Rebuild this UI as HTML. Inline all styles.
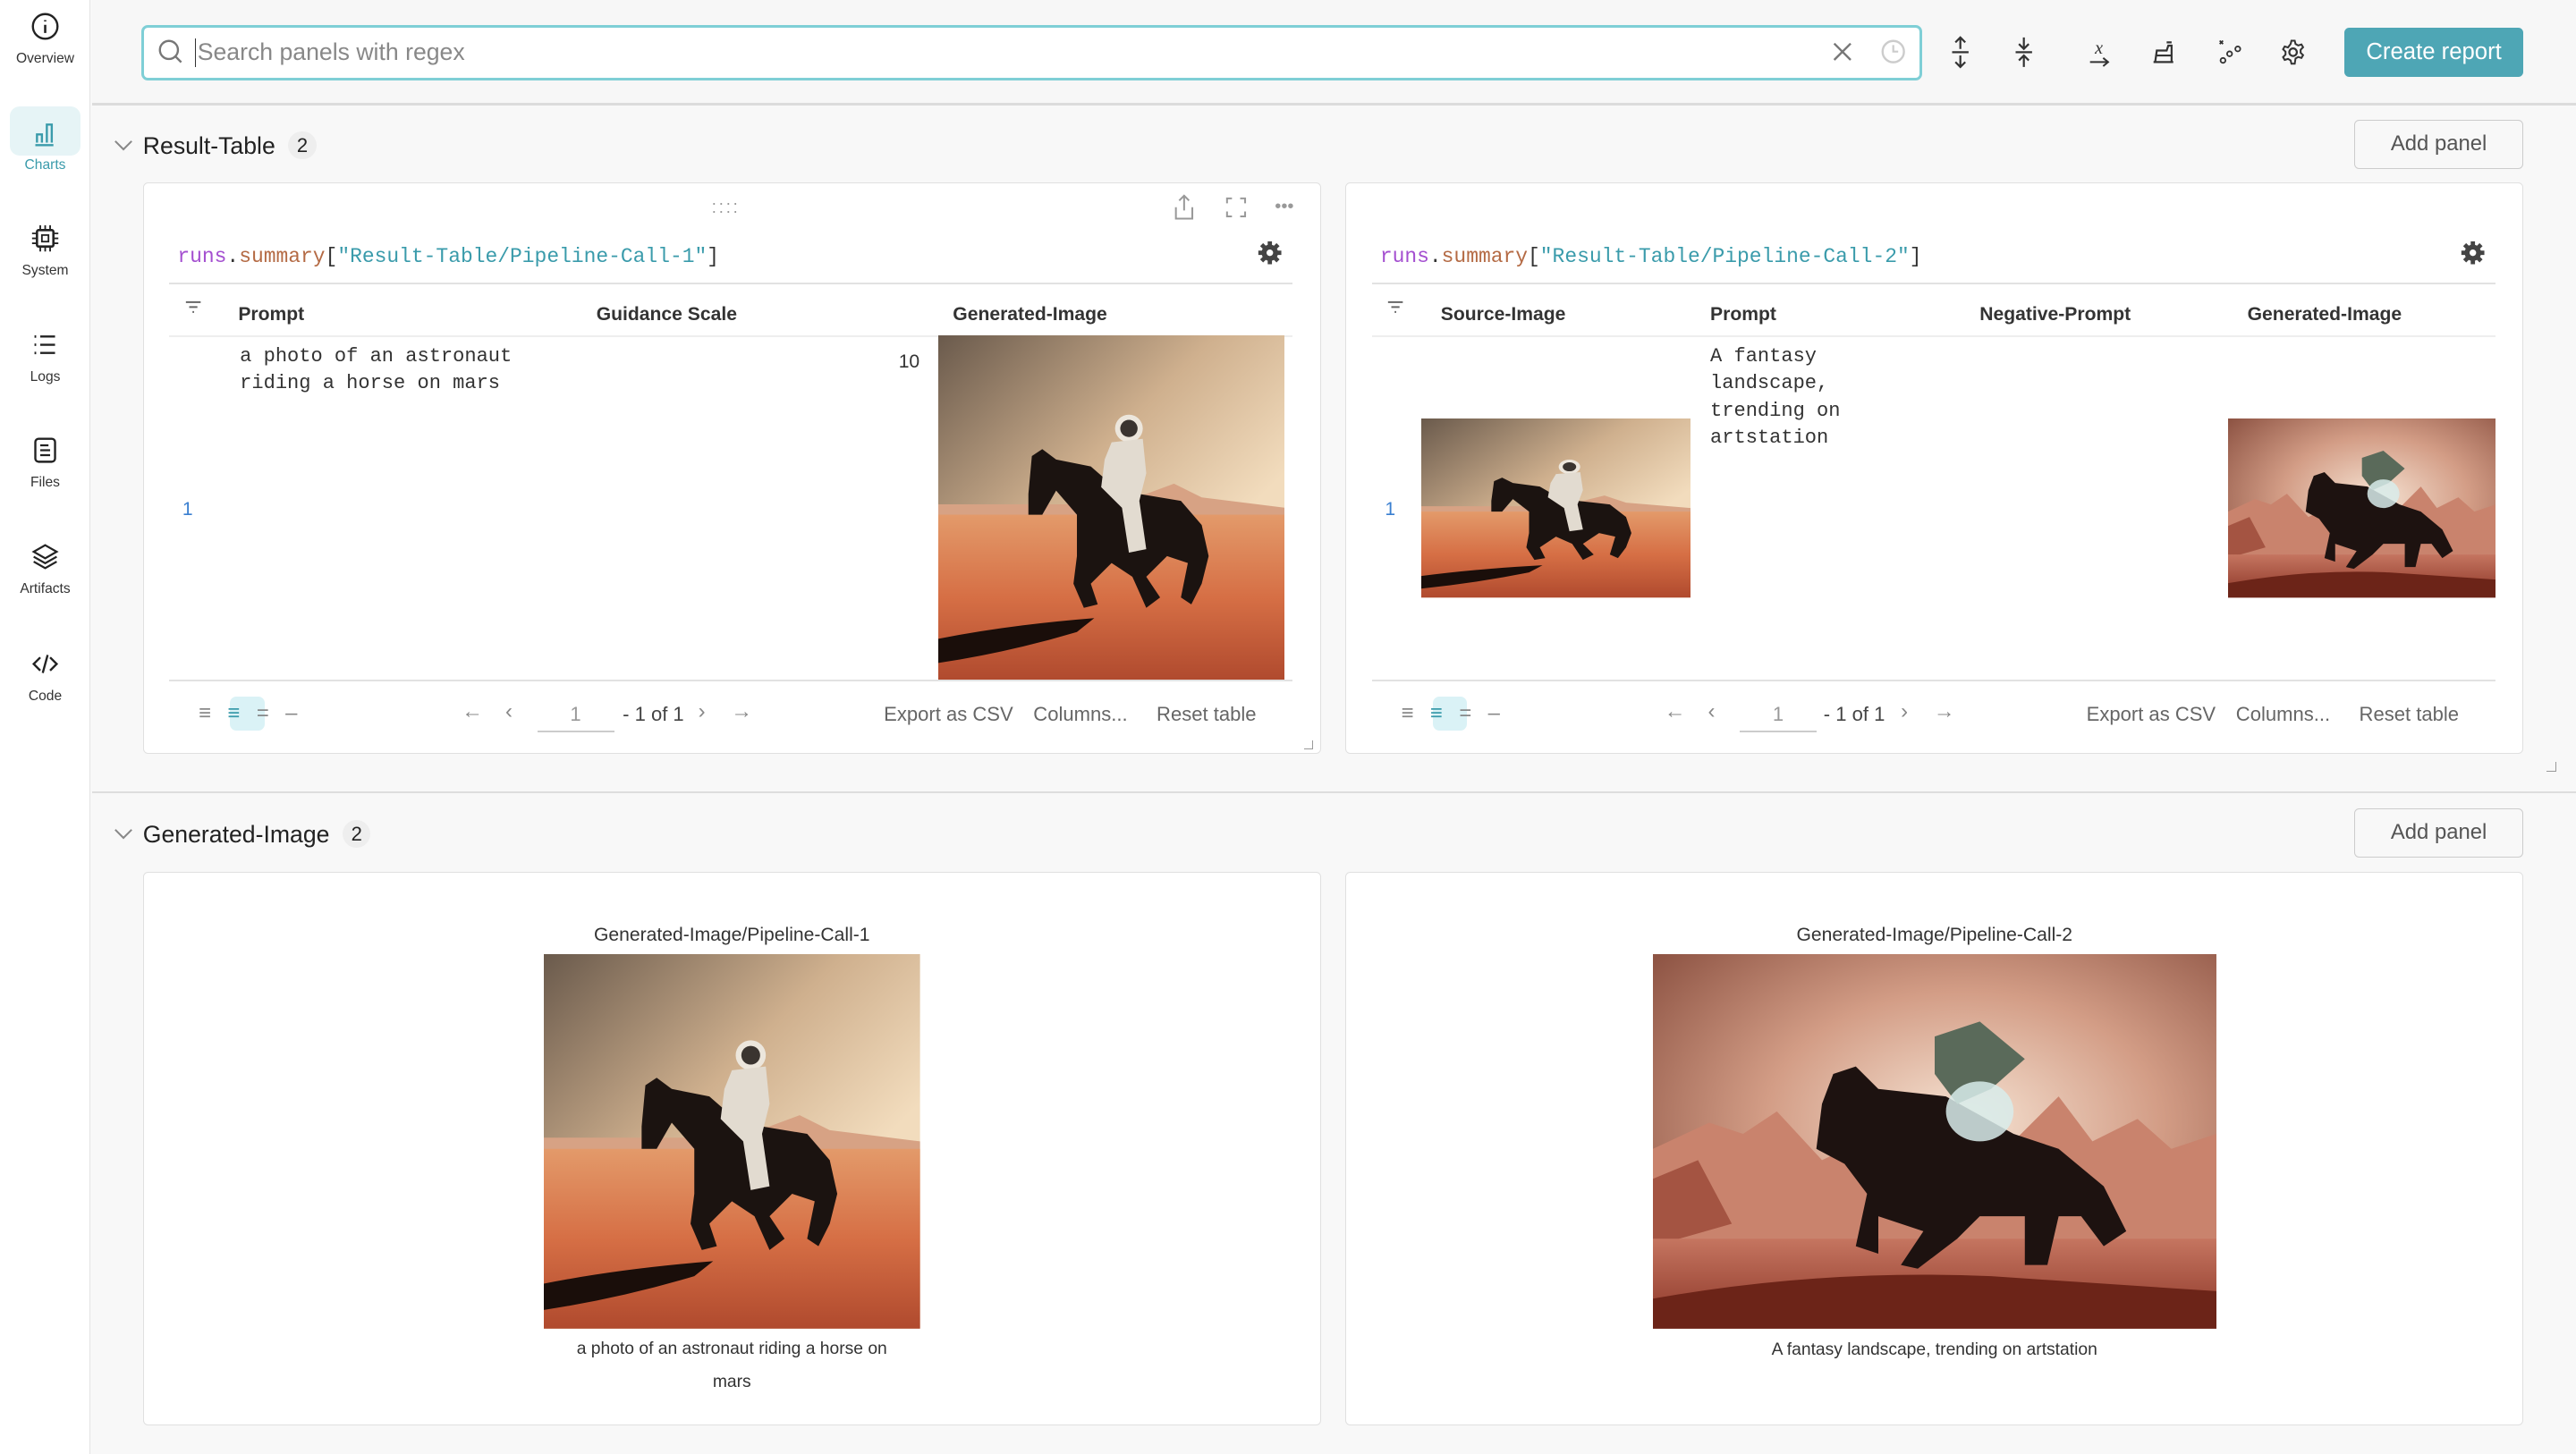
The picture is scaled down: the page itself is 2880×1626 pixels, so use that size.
<!DOCTYPE html>
<html><head><meta charset="utf-8"><style>
*{box-sizing:border-box;margin:0;padding:0}
html,body{width:2880px;height:1626px;overflow:hidden;background:#f8f8f8}
#r{position:absolute;left:0;top:0;width:1568px;height:885.3px;zoom:1.83673;font-family:"Liberation Sans",sans-serif;color:#333;background:#f8f8f8}
.a{position:absolute}
.side{left:0;top:0;width:55px;height:885.3px;background:#fff;border-right:1px solid #e4e4e4}
.si{position:absolute;left:0;width:55px;text-align:center;font-size:8.5px;color:#333}
.si svg{display:block;margin:0 auto 6px}
.top{left:56px;top:0;width:1512px;height:64px;background:#f7f7f7;border-bottom:2px solid #dcdcdc}
.search{left:86px;top:15px;width:1084px;height:34px;border:2px solid #7fcfd6;border-radius:4px;background:#fff}
.ic{position:absolute;top:22px}
.btn{left:1427px;top:17px;width:109px;height:30px;background:#4ea6b5;border-radius:3px;color:#fff;font-size:14px;text-align:center;line-height:30px}
.sec{font-size:14.5px;color:#222}
.badge{display:inline-block;width:17px;height:17px;border-radius:9px;background:#eee;font-size:12px;text-align:center;line-height:17px;margin-left:8px;vertical-align:1px}
.add{width:103px;height:30px;border:1px solid #ccc;border-radius:3px;background:#f8f8f8;font-size:13px;color:#555;text-align:center;line-height:28px}
.panel{background:#fff;border:1px solid #e0e0e0;border-radius:3px}
.mono{font-family:"Liberation Mono",monospace}
.code{font-size:12.5px;color:#333}
.hr{position:absolute;height:1px;background:#e2e2e2}
.th{position:absolute;font-size:11.5px;font-weight:bold;color:#333;top:185px}
.cell{position:absolute;font-family:"Liberation Mono",monospace;font-size:12px;line-height:16.5px;color:#333}
.foot{position:absolute;font-size:12px;color:#666}
.cap{position:absolute;font-size:10.5px;color:#333;text-align:center}
svg.img{position:absolute;display:block}
</style></head><body><div id="r">

<svg width="0" height="0" style="position:absolute"><defs>
<linearGradient id="sky1" x1="0" y1="0" x2="1" y2="1"><stop offset="0" stop-color="#6a5a4c"/><stop offset=".4" stop-color="#cfb08e"/><stop offset=".7" stop-color="#f2dcbd"/></linearGradient>
<linearGradient id="gr1" x1="0" y1="0" x2="0" y2="1"><stop offset="0" stop-color="#e39a6a"/><stop offset=".5" stop-color="#d66f45"/><stop offset="1" stop-color="#b04a2e"/></linearGradient>
<radialGradient id="sky2" cx=".55" cy=".45" r=".7"><stop offset="0" stop-color="#f6e3d3"/><stop offset=".5" stop-color="#d39d86"/><stop offset="1" stop-color="#8e5444"/></radialGradient>
<linearGradient id="gr2" x1="0" y1="0" x2="0" y2="1"><stop offset="0" stop-color="#c57560"/><stop offset="1" stop-color="#8a3426"/></linearGradient>
<g id="astro">
<rect width="100" height="100" fill="url(#sky1)"/>
<path d="M0 49 L40 49 L60 46 L68 43 L76 47 L100 50 L100 100 L0 100Z" fill="#d7a284"/>
<rect y="52" width="100" height="48" fill="url(#gr1)"/>
<path d="M0 88 Q20 84 45 82 L40 86 Q20 92 0 95Z" fill="#1a0e0a"/>
<path d="M27 35 L30 33 L34 36 L44 38 L52 45 L70 48 L76 55 L78 64 L76 72 L73 78 L70 76 L72 66 L66 64 L60 70 L64 76 L60 79 L56 70 L50 66 L44 72 L46 78 L42 79 L39 72 L40 64 L40 52 L34 45 L30 52 L26 52 L26 46Z" fill="#1b1310"/>
<circle cx="55" cy="27" r="4" fill="#ece6dc"/><circle cx="55" cy="27" r="2.5" fill="#3a3430"/>
<path d="M50 31 L59 30 L60 40 L58 48 L60 62 L55 63 L53 50 L47 44 L48 36Z" fill="#e2dbd0"/>
</g>
<g id="fant">
<rect width="100" height="100" fill="url(#sky2)"/>
<path d="M0 52 L10 45 L16 48 L22 42 L30 55 L40 48 L60 56 L72 38 L78 50 L86 44 L92 52 L100 48 L100 80 L0 80Z" fill="#c9836d"/>
<path d="M0 60 L8 55 L14 72 L0 78Z" fill="#a45442"/>
<rect y="76" width="100" height="24" fill="url(#gr2)"/>
<path d="M0 92 Q30 84 60 86 L100 90 L100 100 L0 100Z" fill="#6c2418"/>
<path d="M32 32 L36 30 L40 36 L52 38 L64 48 L72 52 L80 62 L84 74 L80 78 L76 70 L72 70 L70 83 L66 83 L66 70 L58 70 L54 76 L47 84 L44 83 L48 74 L40 70 L40 80 L36 78 L38 64 L34 56 L29 52 L30 40Z" fill="#1d1210"/>
<path d="M50 22 L58 18 L66 28 L60 36 L54 40 L50 32Z" fill="#5a6a5a"/>
<ellipse cx="58" cy="42" rx="6" ry="8" fill="#d8eceb" opacity=".85"/>
</g>
</defs></svg>

<!-- sidebar -->
<div class="a side">
 <div class="si" style="top:7px"><svg width="18" height="18" viewBox="0 0 18 18"><circle cx="9" cy="9" r="7.5" fill="none" stroke="#222" stroke-width="1.3"/><path d="M9 8v5M9 5.2v.8" stroke="#222" stroke-width="1.4"/></svg>Overview</div>
 <div class="a" style="left:6px;top:65px;width:43px;height:30px;background:#e6f4f6;border-radius:6px"></div>
 <div class="si" style="top:72px;color:#3a9bab"><svg width="18" height="18" viewBox="0 0 18 18"><path d="M4 15V10h3v5M10 15V4h3v11M3 16.5h11" fill="none" stroke="#3a9bab" stroke-width="1.3"/></svg>Charts</div>
 <div class="si" style="top:136px"><svg width="18" height="18" viewBox="0 0 18 18"><rect x="4" y="4" width="10" height="10" rx="1" fill="none" stroke="#222" stroke-width="1.4"/><rect x="7" y="7" width="4" height="4" fill="none" stroke="#222"/><path d="M6 1v3M9 1v3M12 1v3M6 14v3M9 14v3M12 14v3M1 6h3M1 9h3M1 12h3M14 6h3M14 9h3M14 12h3" stroke="#222"/></svg>System</div>
 <div class="si" style="top:201px"><svg width="18" height="18" viewBox="0 0 18 18"><path d="M6 4h9M6 9h9M6 14h9" stroke="#222" stroke-width="1.3"/><path d="M2.5 4h1M2.5 9h1M2.5 14h1" stroke="#222" stroke-width="1.5"/></svg>Logs</div>
 <div class="si" style="top:265px"><svg width="18" height="18" viewBox="0 0 18 18"><rect x="3" y="2" width="12" height="14" rx="2" fill="none" stroke="#222" stroke-width="1.3"/><path d="M6 6h5M6 9h6M6 12h6" stroke="#222" stroke-width="1.2"/></svg>Files</div>
 <div class="si" style="top:330px"><svg width="18" height="18" viewBox="0 0 18 18"><path d="M9 2l7 4-7 4-7-4z M2 9l7 4 7-4 M2 12l7 4 7-4" fill="none" stroke="#222" stroke-width="1.2"/></svg>Artifacts</div>
 <div class="si" style="top:395px"><svg width="18" height="18" viewBox="0 0 18 18"><path d="M6 5L2 9l4 4M12 5l4 4-4 4M10.5 3.5l-3 11" fill="none" stroke="#222" stroke-width="1.3"/></svg>Code</div>
</div>

<!-- top bar -->
<div class="a top"></div>
<div class="a search">
 <svg class="a" style="left:8px;top:7px" width="16" height="16" viewBox="0 0 16 16"><circle cx="7" cy="7" r="5.5" fill="none" stroke="#777" stroke-width="1.3"/><path d="M11 11l3.5 3.5" stroke="#777" stroke-width="1.3"/></svg>
 <div class="a" style="left:31px;top:7px;font-size:14.5px;color:#888;border-left:1px solid #333;padding-left:1px;line-height:17px">Search panels with regex</div>
 <svg class="a" style="left:1027px;top:8px" width="14" height="14" viewBox="0 0 14 14"><path d="M2 2l10 10M12 2L2 12" stroke="#777" stroke-width="1.3"/></svg>
 <svg class="a" style="left:1057px;top:7px" width="16" height="16" viewBox="0 0 16 16"><circle cx="8" cy="8" r="6.5" fill="none" stroke="#ccc" stroke-width="1.3"/><path d="M8 4v4h3" fill="none" stroke="#ccc" stroke-width="1.2"/></svg>
</div>
<svg class="ic" style="left:1185px" width="16" height="20" viewBox="0 0 16 20"><path d="M8 1v7M5 4l3-3 3 3M8 12v7M5 16l3 3 3-3M3 10h10" fill="none" stroke="#333" stroke-width="1.2"/></svg>
<svg class="ic" style="left:1224px" width="16" height="20" viewBox="0 0 16 20"><path d="M8 1v7M5 5l3 3 3-3M8 12v7M5 15l3-3 3 3M3 10h10" fill="none" stroke="#333" stroke-width="1.2"/></svg>
<svg class="ic" style="left:1270px" width="16" height="20" viewBox="0 0 16 20"><text x="5" y="11" font-size="11" font-style="italic" font-family="Liberation Serif" fill="#333">x</text><path d="M2 16h11M10 13.5l3 2.5-3 2.5" fill="none" stroke="#333" stroke-width="1.1"/></svg>
<svg class="ic" style="left:1309px" width="16" height="20" viewBox="0 0 16 20"><path d="M2 16h12M3 16l1-7h6l1-3h2v10M4 12h9M10 4h3" fill="none" stroke="#333" stroke-width="1.2"/></svg>
<svg class="ic" style="left:1349px" width="16" height="20" viewBox="0 0 16 20"><path d="M2 3l2 2M4 3L2 5" stroke="#333"/><circle cx="4" cy="15" r="1.5" fill="none" stroke="#333"/><circle cx="8" cy="11" r="1.5" fill="none" stroke="#333"/><circle cx="13" cy="8" r="1.5" fill="none" stroke="#333"/></svg>
<svg class="ic" style="left:1388px" width="16" height="20" viewBox="0 0 16 20"><circle cx="8" cy="10" r="2.3" fill="none" stroke="#333" stroke-width="1.2"/><path d="M7 3h2l.5 2 1.6.9 2-.6 1 1.7-1.5 1.5v1.8l1.5 1.5-1 1.7-2-.6-1.6.9L9 17H7l-.5-2-1.6-.9-2 .6-1-1.7 1.5-1.5V9.7L1.9 8.2l1-1.7 2 .6L6.5 5z" fill="none" stroke="#333" stroke-width="1.1"/></svg>
<div class="a btn">Create report</div>

<!-- Section 1 -->
<svg class="a" style="left:69px;top:85px" width="12" height="8" viewBox="0 0 12 8"><path d="M1 1l5 5 5-5" fill="none" stroke="#888" stroke-width="1.1"/></svg>
<div class="a sec" style="left:87px;top:80px">Result-Table<span class="badge">2</span></div>
<div class="a add" style="left:1433px;top:73px">Add panel</div>

<!-- panel 1 -->
<div class="a panel" style="left:87px;top:111px;width:717px;height:348px"></div>
<div class="a" style="left:433px;top:121px;font-size:10px;color:#999;letter-spacing:1px;line-height:5px">····<br>····</div>
<svg class="a" style="left:714px;top:118px" width="14" height="16" viewBox="0 0 14 16"><path d="M7 1v9M4 4l3-3 3 3M2 8v7h10V8" fill="none" stroke="#999" stroke-width="1.1"/></svg>
<svg class="a" style="left:746px;top:120px" width="13" height="13" viewBox="0 0 13 13"><path d="M1 4V1h3M9 1h3v3M12 9v3H9M4 12H1V9" fill="none" stroke="#999" stroke-width="1.1"/></svg>
<div class="a" style="left:776px;top:120px;font-size:11px;color:#999">•••</div>
<div class="a mono code" style="left:108px;top:149px"><span style="color:#a44fd0">runs</span>.<span style="color:#b46a44">summary</span>[<span style="color:#3a9bab">"Result-Table/Pipeline-Call-1"</span>]</div>
<svg class="a" style="left:765px;top:146px" width="16" height="16" viewBox="0 0 16 16"><circle cx="8" cy="8" r="5" fill="#444"/><path d="M8 1v14M1 8h14M3 3l10 10M13 3L3 13" stroke="#444" stroke-width="2.6"/><circle cx="8" cy="8" r="2" fill="#fff"/></svg>
<div class="hr" style="left:103px;top:172px;width:684px"></div>
<svg class="a" style="left:112px;top:183px" width="11" height="9" viewBox="0 0 11 9"><path d="M1 1h9M3 4h5M5 7h1" stroke="#666" stroke-width="1.1"/></svg>
<div class="th" style="left:145px">Prompt</div>
<div class="th" style="left:363px">Guidance Scale</div>
<div class="th" style="left:580px">Generated-Image</div>
<div class="hr" style="left:103px;top:204px;width:684px;background:#eee"></div>
<div class="cell" style="left:146px;top:209px">a photo of an astronaut<br>riding a horse on mars</div>
<div class="a" style="left:547px;top:214px;font-size:11.5px;color:#333">10</div>
<div class="a" style="left:111px;top:304px;font-size:11.5px;color:#3a7fd0">1</div>
<svg class="img" style="left:571px;top:204px" width="211" height="210" viewBox="0 0 100 100" preserveAspectRatio="none"><use href="#astro"/></svg>
<div class="hr" style="left:103px;top:414px;width:684px"></div>
<div class="a" style="left:140px;top:424px;width:21px;height:21px;background:#daf2f6;border-radius:4px"></div>
<div class="foot" style="left:121px;top:427px;font-size:13px;color:#888;letter-spacing:10px">≡<span style="color:#3a9bab">≡</span>=–</div>
<div class="foot" style="left:281px;top:426px;font-size:13px;color:#888;word-spacing:10px">← ‹</div>
<div class="foot" style="left:347px;top:428px;color:#999">1</div>
<div class="hr" style="left:327px;top:445px;width:47px;background:#ccc"></div>
<div class="foot" style="left:379px;top:428px;color:#444">- 1 of 1</div>
<div class="foot" style="left:425px;top:426px;font-size:13px;color:#888;word-spacing:12px">› →</div>
<div class="foot" style="left:538px;top:428px">Export as CSV</div>
<div class="foot" style="left:629px;top:428px">Columns...</div>
<div class="foot" style="left:704px;top:428px">Reset table</div>
<div class="a" style="left:794px;top:451px;width:5px;height:5px;border-right:1px solid #999;border-bottom:1px solid #999"></div>

<!-- panel 2 -->
<div class="a panel" style="left:819px;top:111px;width:717px;height:348px"></div>
<div class="a mono code" style="left:840px;top:149px"><span style="color:#a44fd0">runs</span>.<span style="color:#b46a44">summary</span>[<span style="color:#3a9bab">"Result-Table/Pipeline-Call-2"</span>]</div>
<svg class="a" style="left:1497px;top:146px" width="16" height="16" viewBox="0 0 16 16"><circle cx="8" cy="8" r="5" fill="#444"/><path d="M8 1v14M1 8h14M3 3l10 10M13 3L3 13" stroke="#444" stroke-width="2.6"/><circle cx="8" cy="8" r="2" fill="#fff"/></svg>
<div class="hr" style="left:835px;top:172px;width:684px"></div>
<svg class="a" style="left:844px;top:183px" width="11" height="9" viewBox="0 0 11 9"><path d="M1 1h9M3 4h5M5 7h1" stroke="#666" stroke-width="1.1"/></svg>
<div class="th" style="left:877px">Source-Image</div>
<div class="th" style="left:1041px">Prompt</div>
<div class="th" style="left:1205px">Negative-Prompt</div>
<div class="th" style="left:1368px">Generated-Image</div>
<div class="hr" style="left:835px;top:204px;width:684px;background:#eee"></div>
<div class="cell" style="left:1041px;top:209px">A fantasy<br>landscape,<br>trending on<br>artstation</div>
<div class="a" style="left:843px;top:304px;font-size:11.5px;color:#3a7fd0">1</div>
<svg class="img" style="left:865px;top:255px" width="164" height="109" viewBox="0 0 100 100" preserveAspectRatio="none"><use href="#astro"/></svg>
<svg class="img" style="left:1356px;top:255px" width="163" height="109" viewBox="0 0 100 100" preserveAspectRatio="none"><use href="#fant"/></svg>
<div class="hr" style="left:835px;top:414px;width:684px"></div>
<div class="a" style="left:872px;top:424px;width:21px;height:21px;background:#daf2f6;border-radius:4px"></div>
<div class="foot" style="left:853px;top:427px;font-size:13px;color:#888;letter-spacing:10px">≡<span style="color:#3a9bab">≡</span>=–</div>
<div class="foot" style="left:1013px;top:426px;font-size:13px;color:#888;word-spacing:10px">← ‹</div>
<div class="foot" style="left:1079px;top:428px;color:#999">1</div>
<div class="hr" style="left:1059px;top:445px;width:47px;background:#ccc"></div>
<div class="foot" style="left:1110px;top:428px;color:#444">- 1 of 1</div>
<div class="foot" style="left:1157px;top:426px;font-size:13px;color:#888;word-spacing:12px">› →</div>
<div class="foot" style="left:1270px;top:428px">Export as CSV</div>
<div class="foot" style="left:1361px;top:428px">Columns...</div>
<div class="foot" style="left:1436px;top:428px">Reset table</div>
<div class="a" style="left:1550px;top:464px;width:6px;height:6px;border-right:1px solid #999;border-bottom:1px solid #999"></div>

<!-- Section 2 -->
<div class="hr" style="left:56px;top:482px;width:1512px;background:#ddd"></div>
<svg class="a" style="left:69px;top:504px" width="12" height="8" viewBox="0 0 12 8"><path d="M1 1l5 5 5-5" fill="none" stroke="#888" stroke-width="1.1"/></svg>
<div class="a sec" style="left:87px;top:499px">Generated-Image<span class="badge">2</span></div>
<div class="a add" style="left:1433px;top:492px">Add panel</div>

<div class="a panel" style="left:87px;top:531px;width:717px;height:337px"></div>
<div class="cap" style="left:87px;top:563px;width:717px;font-size:11.5px">Generated-Image/Pipeline-Call-1</div>
<svg class="img" style="left:331px;top:581px" width="229" height="228" viewBox="0 0 100 100" preserveAspectRatio="none"><use href="#astro"/></svg>
<div class="cap" style="left:343px;top:812px;width:205px;line-height:20px">a photo of an astronaut riding a horse on mars</div>

<div class="a panel" style="left:819px;top:531px;width:717px;height:337px"></div>
<div class="cap" style="left:819px;top:563px;width:717px;font-size:11.5px">Generated-Image/Pipeline-Call-2</div>
<svg class="img" style="left:1006px;top:581px" width="343" height="228" viewBox="0 0 100 100" preserveAspectRatio="none"><use href="#fant"/></svg>
<div class="cap" style="left:819px;top:815px;width:717px;line-height:14px">A fantasy landscape, trending on artstation</div>

</div></body></html>
